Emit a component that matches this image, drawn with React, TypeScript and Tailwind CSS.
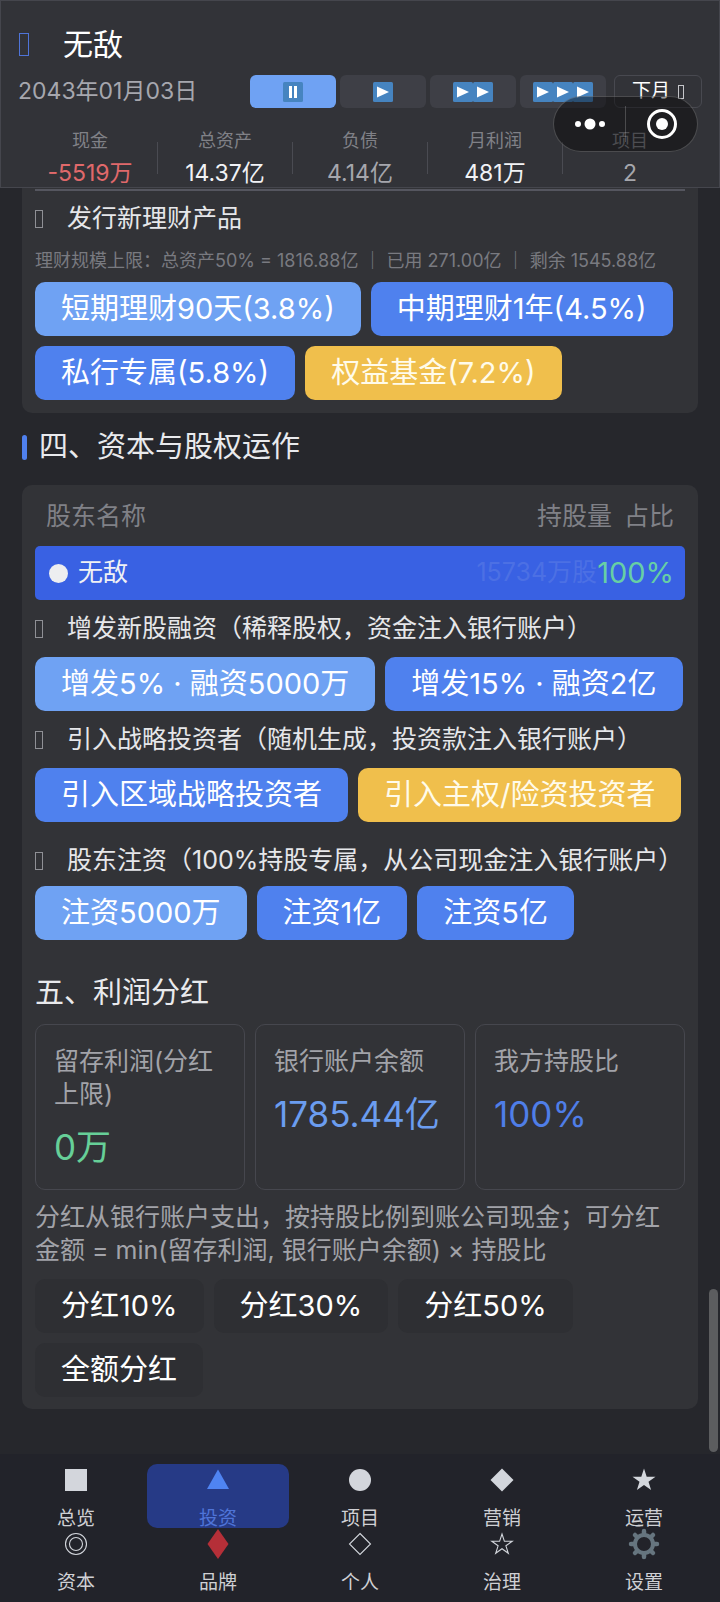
import React from 'react';

type Tone = 'light' | 'blue' | 'gold' | 'dark';

interface Action {
    label: string;
    tone: Tone;
}

const toneClass: Record<Tone, string> = {
    light: 'bg-[#6fa2f3] text-white',
    blue: 'bg-[#4f81ee] text-white',
    gold: 'bg-[#f0bf4c] text-[#fffbea]',
    dark: 'bg-[#2e2f33] text-white',
};

const stats = [
    { label: '现金', value: '-5519万', color: 'text-[#e0696b]' },
    { label: '总资产', value: '14.37亿', color: 'text-[#f1f2f5]' },
    { label: '负债', value: '4.14亿', color: 'text-[#a6a7ad]' },
    { label: '月利润', value: '481万', color: 'text-[#f1f2f5]' },
    { label: '项目', value: '2', color: 'text-[#a6a7ad]' },
];

const shareholders = [{ name: '无敌', shares: '15734万股', ratio: '100%' }];

const dividendStats = [
    { label: '留存利润(分红上限)', value: '0万', color: 'text-[#66cf98]' },
    { label: '银行账户余额', value: '1785.44亿', color: 'text-[#6b9df0]' },
    { label: '我方持股比', value: '100%', color: 'text-[#4f7ee8]' },
];

const navItems = [
    { label: '总览', icon: <rect x="5" y="5" width="22" height="22" fill="#d3d6dc" /> },
    { label: '投资', icon: <path d="M16 5.500 27 25H5Z" fill="#4f84f2" />, active: true },
    { label: '项目', icon: <circle cx="16" cy="16" r="11" fill="#d3d6dc" /> },
    { label: '营销', icon: <path d="M16 4.500 27.500 16 16 27.500 4.500 16Z" fill="#d3d6dc" /> },
    {
        label: '运营',
        icon: <path d="M16 4.500l2.700 8.200h8.800l-7 5 2.600 8.300-7.100-5.100L8.900 26l2.600-8.300-7-5h8.800Z" fill="#d3d6dc" />,
    },
    {
        label: '资本',
        icon: (
            <g fill="none" stroke="#d3d6dc" strokeWidth="1.100">
                <circle cx="16" cy="16" r="10.500" />
                <circle cx="16" cy="16" r="6.500" />
            </g>
        ),
    },
    { label: '品牌', icon: <path d="M16 1 26.500 16 16 31 5.500 16Z" fill="#b52f38" /> },
    { label: '个人', icon: <path d="M16 5.500 26.500 16 16 26.500 5.500 16Z" fill="none" stroke="#d3d6dc" strokeWidth="1.100" /> },
    {
        label: '治理',
        icon: (
            <path
                d="M16 6l2.400 7.300h7.800l-6.300 4.500 2.400 7.500-6.300-4.600-6.300 4.600 2.400-7.500-6.300-4.500h7.800Z"
                fill="none"
                stroke="#d3d6dc"
                strokeWidth="1.100"
            />
        ),
    },
    {
        label: '设置',
        icon: (
            <g stroke="#66757f" fill="none">
                <circle cx="16" cy="16" r="9" strokeWidth="4" />
                <path
                    d="M16 6V3M16 26v3M6 16H3M26 16h3M9 9 7 7M23 23l2 2M9 23l-2 2M23 9l2-2"
                    strokeWidth="4.500"
                    strokeLinecap="round"
                />
            </g>
        ),
    },
];

// Outline box shown in front of titles
const Tofu = ({ className }: { className: string }) => (
    <span className={`inline-block shrink-0 border ${className}`} aria-hidden="true" />
);

const PlayTile = ({ paused }: { paused?: boolean }) => (
    <svg viewBox="0 0 20 20" className="h-5 w-5" aria-hidden="true">
        <rect width="20" height="20" rx="1.500" fill="#4684c0" />
        {paused ? <path d="M6 4h3v12H6zM11 4h3v12h-3z" fill="#fff" /> : <path d="M4 4.500 16 10 4 15.500Z" fill="#fff" />}
    </svg>
);

const SpeedButton = ({ level }: { level: number }) => (
    <button
        aria-label={level === 0 ? '暂停' : `${level}倍速`}
        className={`flex h-[33px] w-[86px] items-center justify-center rounded-md ${level === 0 ? 'bg-[#6fa2f3]' : 'bg-[#3e3f46]'}`}
    >
        {level === 0 ? <PlayTile paused /> : Array.from({ length: level }, (_, i) => <PlayTile key={i} />)}
    </button>
);

const ActionRow = ({ actions }: { actions: Action[] }) => (
    <div className="flex flex-wrap gap-[10px]">
        {actions.map((action) => (
            <button
                key={action.label}
                className={`h-[54px] whitespace-nowrap rounded-[10px] px-[26px] text-[29px] leading-[54px] ${toneClass[action.tone]}`}
            >
                {action.label}
            </button>
        ))}
    </div>
);

const GroupTitle = ({ children, className = 'h-[57px]' }: { children: React.ReactNode; className?: string }) => (
    <h3 className={`flex items-center whitespace-nowrap text-[25px] text-[#e6e7ea] ${className}`}>
        <Tofu className="mr-6 h-[18px] w-2 border-[#8f9095]" />
        {children}
    </h3>
);

const Capsule = () => (
    <div className="absolute right-[22px] top-24 flex h-14 w-[145px] items-center rounded-full border border-white/20 bg-black/40">
        <button aria-label="更多" className="flex flex-1 justify-center">
            <svg viewBox="0 0 32 12" className="h-3 w-8" fill="#fff">
                <circle cx="4" cy="6" r="3" />
                <circle cx="16" cy="6" r="5.500" />
                <circle cx="28" cy="6" r="3" />
            </svg>
        </button>
        <span className="h-9 w-px bg-white/20" />
        <button aria-label="关闭" className="flex flex-1 justify-center">
            <svg viewBox="0 0 30 30" className="h-[30px] w-[30px]">
                <circle cx="15" cy="15" r="13.500" fill="none" stroke="#fff" strokeWidth="3" />
                <circle cx="15" cy="15" r="6" fill="#fff" />
            </svg>
        </button>
    </div>
);

const Header = () => (
    <header className="border border-[#45464d] bg-[#323338] pt-[14px]">
        <div className="flex h-[58px] items-center px-[18px]">
            <Tofu className="mr-[34px] h-[23px] w-[10px] border-[#4f74d8]" />
            <h1 className="text-[30px] leading-9 text-white">无敌</h1>
        </div>
        <div className="mt-[2px] flex items-center justify-between px-[17px]">
            <time className="text-[23px] leading-[33px] text-[#a6a7ae]">2043年01月03日</time>
            <div className="flex gap-1">
                <SpeedButton level={0} />
                <SpeedButton level={1} />
                <SpeedButton level={2} />
                <SpeedButton level={3} />
                <button className="ml-1 flex h-[33px] w-[88px] items-center justify-center gap-2 rounded-md border border-[#484950] text-[19px] text-white">
                    下月
                    <Tofu className="h-[14px] w-[6px] border-[#c5c6ca]" />
                </button>
            </div>
        </div>
        <dl className="mt-[21px] flex items-center px-[22px]">
            {stats.map((stat, i) => (
                <React.Fragment key={stat.label}>
                    {i > 0 && <span className="h-8 w-px bg-[#4a4b52]" />}
                    <div className="flex-1 text-center">
                        <dt className="text-[18px] leading-6 text-[#808187]">{stat.label}</dt>
                        <dd className={`mt-[6px] text-[23px] leading-7 ${stat.color}`}>{stat.value}</dd>
                    </div>
                </React.Fragment>
            ))}
        </dl>
    </header>
);

const App: React.FC = () => {
    return (
        <div className="relative flex min-h-screen flex-col bg-[#26272c] font-['Inter','Noto_Sans_CJK_SC',sans-serif]" lang="zh-CN">
            <Header />
            <Capsule />

            <main className="relative flex-1 px-[22px] pb-11">
                <section className="rounded-b-[10px] bg-[#323337] px-[13px] pb-[13px] pt-px">
                    <hr className="border-t-2 border-[#55565f]" />
                    <GroupTitle className="h-14">发行新理财产品</GroupTitle>
                    <p className="mb-[7px] whitespace-nowrap text-[18px] leading-7 text-[#797a80]">
                        理财规模上限：总资产50% = 1816.88亿 ｜ 已用 271.00亿 ｜ 剩余 1545.88亿
                    </p>
                    <ActionRow
                        actions={[
                            { label: '短期理财90天(3.8%)', tone: 'light' },
                            { label: '中期理财1年(4.5%)', tone: 'blue' },
                            { label: '私行专属(5.8%)', tone: 'blue' },
                            { label: '权益基金(7.2%)', tone: 'gold' },
                        ]}
                    />
                </section>

                <h2 className="mb-1 flex h-[68px] items-center gap-3 text-[29px] text-[#e9eaed]">
                    <span className="h-[25px] w-[5px] rounded-full bg-[#4f80ee]" />
                    四、资本与股权运作
                </h2>

                <section className="rounded-[10px] bg-[#323337] px-[13px] pb-3 pt-[3px]">
                    <table className="w-full text-[25px]">
                        <thead>
                            <tr className="h-[58px] text-[#808187]">
                                <th className="pl-[11px] text-left font-normal">股东名称</th>
                                <th className="pr-[11px] text-right font-normal" colSpan={2}>
                                    <span className="mr-3">持股量</span>
                                    <span>占比</span>
                                </th>
                            </tr>
                        </thead>
                        <tbody>
                            {shareholders.map((holder) => (
                                <tr key={holder.name} className="h-[54px] bg-[#3961e3]">
                                    <td className="rounded-l-[5px] py-0 pl-[14px] text-[#f0f1f4]">
                                        <span className="flex items-center gap-[10px]">
                                            <span className="h-[19px] w-[19px] rounded-full bg-[#edeef0]" />
                                            {holder.name}
                                        </span>
                                    </td>
                                    <td className="py-0 text-right text-[#4c70e4]">{holder.shares}</td>
                                    <td className="w-20 rounded-r-[5px] py-0 pr-[11px] text-right text-[29px] leading-9 text-[#67cfa5]">
                                        {holder.ratio}
                                    </td>
                                </tr>
                            ))}
                        </tbody>
                    </table>

                    <GroupTitle>增发新股融资（稀释股权，资金注入银行账户）</GroupTitle>
                    <ActionRow
                        actions={[
                            { label: '增发5% · 融资5000万', tone: 'light' },
                            { label: '增发15% · 融资2亿', tone: 'blue' },
                        ]}
                    />

                    <GroupTitle>引入战略投资者（随机生成，投资款注入银行账户）</GroupTitle>
                    <ActionRow
                        actions={[
                            { label: '引入区域战略投资者', tone: 'blue' },
                            { label: '引入主权/险资投资者', tone: 'gold' },
                        ]}
                    />

                    <GroupTitle className="mt-[14px] h-[50px]">股东注资（100%持股专属，从公司现金注入银行账户）</GroupTitle>
                    <ActionRow
                        actions={[
                            { label: '注资5000万', tone: 'light' },
                            { label: '注资1亿', tone: 'blue' },
                            { label: '注资5亿', tone: 'blue' },
                        ]}
                    />

                    <h2 className="mt-[22px] flex h-[62px] items-center text-[29px] text-[#e9eaed]">五、利润分红</h2>
                    <dl className="grid grid-cols-3 gap-[10px]">
                        {dividendStats.map((stat) => (
                            <div key={stat.label} className="rounded-[10px] border border-[#46474e] px-[18px] pb-5 pt-5">
                                <dt className="text-[25px] leading-[33px] text-[#a2a3a9]">{stat.label}</dt>
                                <dd className={`mt-[14px] whitespace-nowrap text-[35px] leading-[44px] ${stat.color}`}>{stat.value}</dd>
                            </div>
                        ))}
                    </dl>
                    <p className="mb-3 mt-[11px] pr-3 text-[25px] leading-[33px] text-[#a2a3a9]">
                        分红从银行账户支出，按持股比例到账公司现金；可分红金额 = min(留存利润, 银行账户余额) × 持股比
                    </p>
                    <ActionRow
                        actions={[
                            { label: '分红10%', tone: 'dark' },
                            { label: '分红30%', tone: 'dark' },
                            { label: '分红50%', tone: 'dark' },
                            { label: '全额分红', tone: 'dark' },
                        ]}
                    />
                </section>

                {/* scroll thumb */}
                <div className="absolute bottom-[2px] right-[2px] h-[163px] w-[9px] rounded-full bg-[#5c5d5f]" />
            </main>

            <nav className="grid grid-cols-5 bg-[#22232a] px-[5px] py-[10px]">
                {navItems.map((item) => (
                    <button
                        key={item.label}
                        className={`flex h-16 flex-col items-center rounded-[10px] text-[19px] ${item.active ? 'bg-[#263a86] text-[#4f74d8]' : 'text-[#cfd0d4]'}`}
                    >
                        <svg viewBox="0 0 32 32" className="h-8 w-8 shrink-0" aria-hidden="true">
                            {item.icon}
                        </svg>
                        <span className="mt-[11px] leading-6">{item.label}</span>
                    </button>
                ))}
            </nav>
        </div>
    );
};

export default App;
